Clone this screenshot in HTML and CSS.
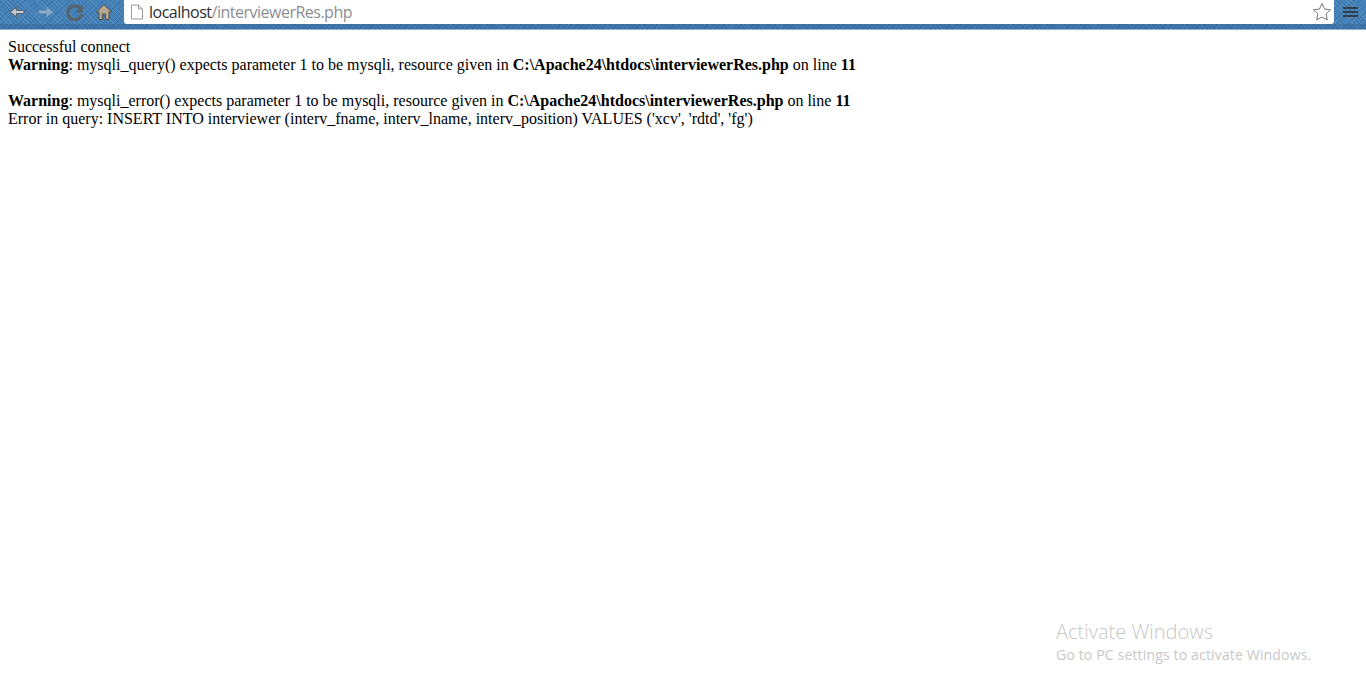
FILE: index.html
```html
<!DOCTYPE html>
<html lang="en">
<head>
<meta charset="utf-8">
<title>localhost/interviewerRes.php</title>
<link rel="stylesheet" href="styles.css">
</head>
<body>
<header class="toolbar">
  <nav class="nav">
    <svg class="nav-icon" viewBox="0 0 18 18"><path d="M16 7.500H8.500V4L2 9l6.500 5v-3.500H16z" fill="#c3ccd2" stroke="#5b6873" stroke-width="1.200"/></svg>
    <svg class="nav-icon" viewBox="0 0 18 18"><path d="M2 7.500h7.500V4L16 9l-6.500 5v-3.500H2z" fill="#8eafc9" stroke="#6a93b5" stroke-width="1.200"/></svg>
    <svg class="nav-icon" viewBox="0 0 18 18"><path d="M14.500 5.500A7 7 0 1 0 15.800 11" fill="none" stroke="#56656f" stroke-width="3.400"/><path d="M17 2v7.500H9.500z" fill="#56656f"/></svg>
    <svg class="nav-icon" viewBox="0 0 18 18"><path d="M9 1.500 1.500 9H4v7.500h3.500V11h3v5.500H14V9h2.500z" fill="#b5a78f" stroke="#5a4f46" stroke-width="1"/></svg>
  </nav>
  <div class="omnibox">
    <svg class="page-icon" viewBox="0 0 14 16"><path d="M1.500 1h7l4 4v10h-11zM8.500 1v4h4" fill="#fff" stroke="#9a9a9a"/></svg>
    <span class="url"><span class="host">localhost</span>/interviewerRes.php</span>
    <svg class="star" viewBox="0 0 20 20"><path d="m10 1.500 2.600 5.600 6 .7-4.500 4.100 1.200 6L10 15l-5.300 2.900 1.200-6L1.400 7.800l6-.7z" fill="#fff" stroke="#777" stroke-width="1"/></svg>
  </div>
  <div class="menu"><i></i><i></i><i></i></div>
</header>
<main class="content">
Successful connect<br>
<b>Warning</b>: mysqli_query() expects parameter 1 to be mysqli, resource given in <b>C:\Apache24\htdocs\interviewerRes.php</b> on line <b>11</b><br>
<br>
<b>Warning</b>: mysqli_error() expects parameter 1 to be mysqli, resource given in <b>C:\Apache24\htdocs\interviewerRes.php</b> on line <b>11</b><br>
Error in query: INSERT INTO interviewer (interv_fname, interv_lname, interv_position) VALUES ('xcv', 'rdtd', 'fg')
</main>
<aside class="watermark">
  <div class="wm-title">Activate Windows</div>
  <div class="wm-sub">Go to PC settings to activate Windows.</div>
</aside>
</body>
</html>
```

FILE: styles.css
```css
html, body {
  margin: 0;
  padding: 0;
  height: 100%;
  overflow: hidden;
  background: #fff;
}
.toolbar {
  display: flex;
  align-items: flex-start;
  height: 30px;
  box-sizing: border-box;
  background-color: #417fb6;
  background-image:
    linear-gradient(to bottom, transparent 0 24px, rgba(30,70,115,.22) 24px 29px),
    repeating-linear-gradient(45deg, rgba(255,255,255,.1) 0 1px, transparent 1px 3px),
    repeating-linear-gradient(-45deg, rgba(10,50,100,.14) 0 1px, transparent 1px 4px);
  border-bottom: 1px solid #8fb1cd;
}
.nav {
  display: flex;
  align-items: center;
  gap: 11px;
  width: 124px;
  height: 24px;
  box-sizing: border-box;
  padding-left: 8px;
  flex: none;
}
.nav-icon {
  width: 18px;
  height: 18px;
  flex: none;
}
.omnibox {
  flex: 1;
  display: flex;
  align-items: center;
  height: 24px;
  box-sizing: border-box;
  padding: 0 2px 0 6px;
  background: #fff;
  border-radius: 0 0 3px 3px;
}
.page-icon {
  width: 14px;
  height: 16px;
  flex: none;
}
.url {
  flex: 1;
  margin-left: 5px;
  font: 16px/24px "Open Sans", sans-serif;
  color: #8a8f94;
  letter-spacing: -.5px;
}
.host {
  color: #2e2e2e;
}
.star {
  width: 20px;
  height: 20px;
  flex: none;
}
.menu {
  flex: none;
  width: 32px;
  display: flex;
  flex-direction: column;
  align-items: center;
  gap: 2px;
  padding-top: 7px;
}
.menu i {
  display: block;
  width: 15px;
  height: 2px;
  background: #33404c;
}
.content {
  margin: 8px;
  font: 16px "Liberation Serif", "Times New Roman", serif;
  color: #000;
}
.watermark {
  position: absolute;
  left: 1056px;
  top: 620px;
  font-family: "Open Sans", sans-serif;
  color: #c8c8c8;
  white-space: nowrap;
}
.wm-title {
  font-size: 20px;
  line-height: 24px;
  font-weight: 300;
}
.wm-sub {
  font-size: 14px;
  line-height: 20px;
  letter-spacing: .16px;
  margin-top: 1px;
}
```
